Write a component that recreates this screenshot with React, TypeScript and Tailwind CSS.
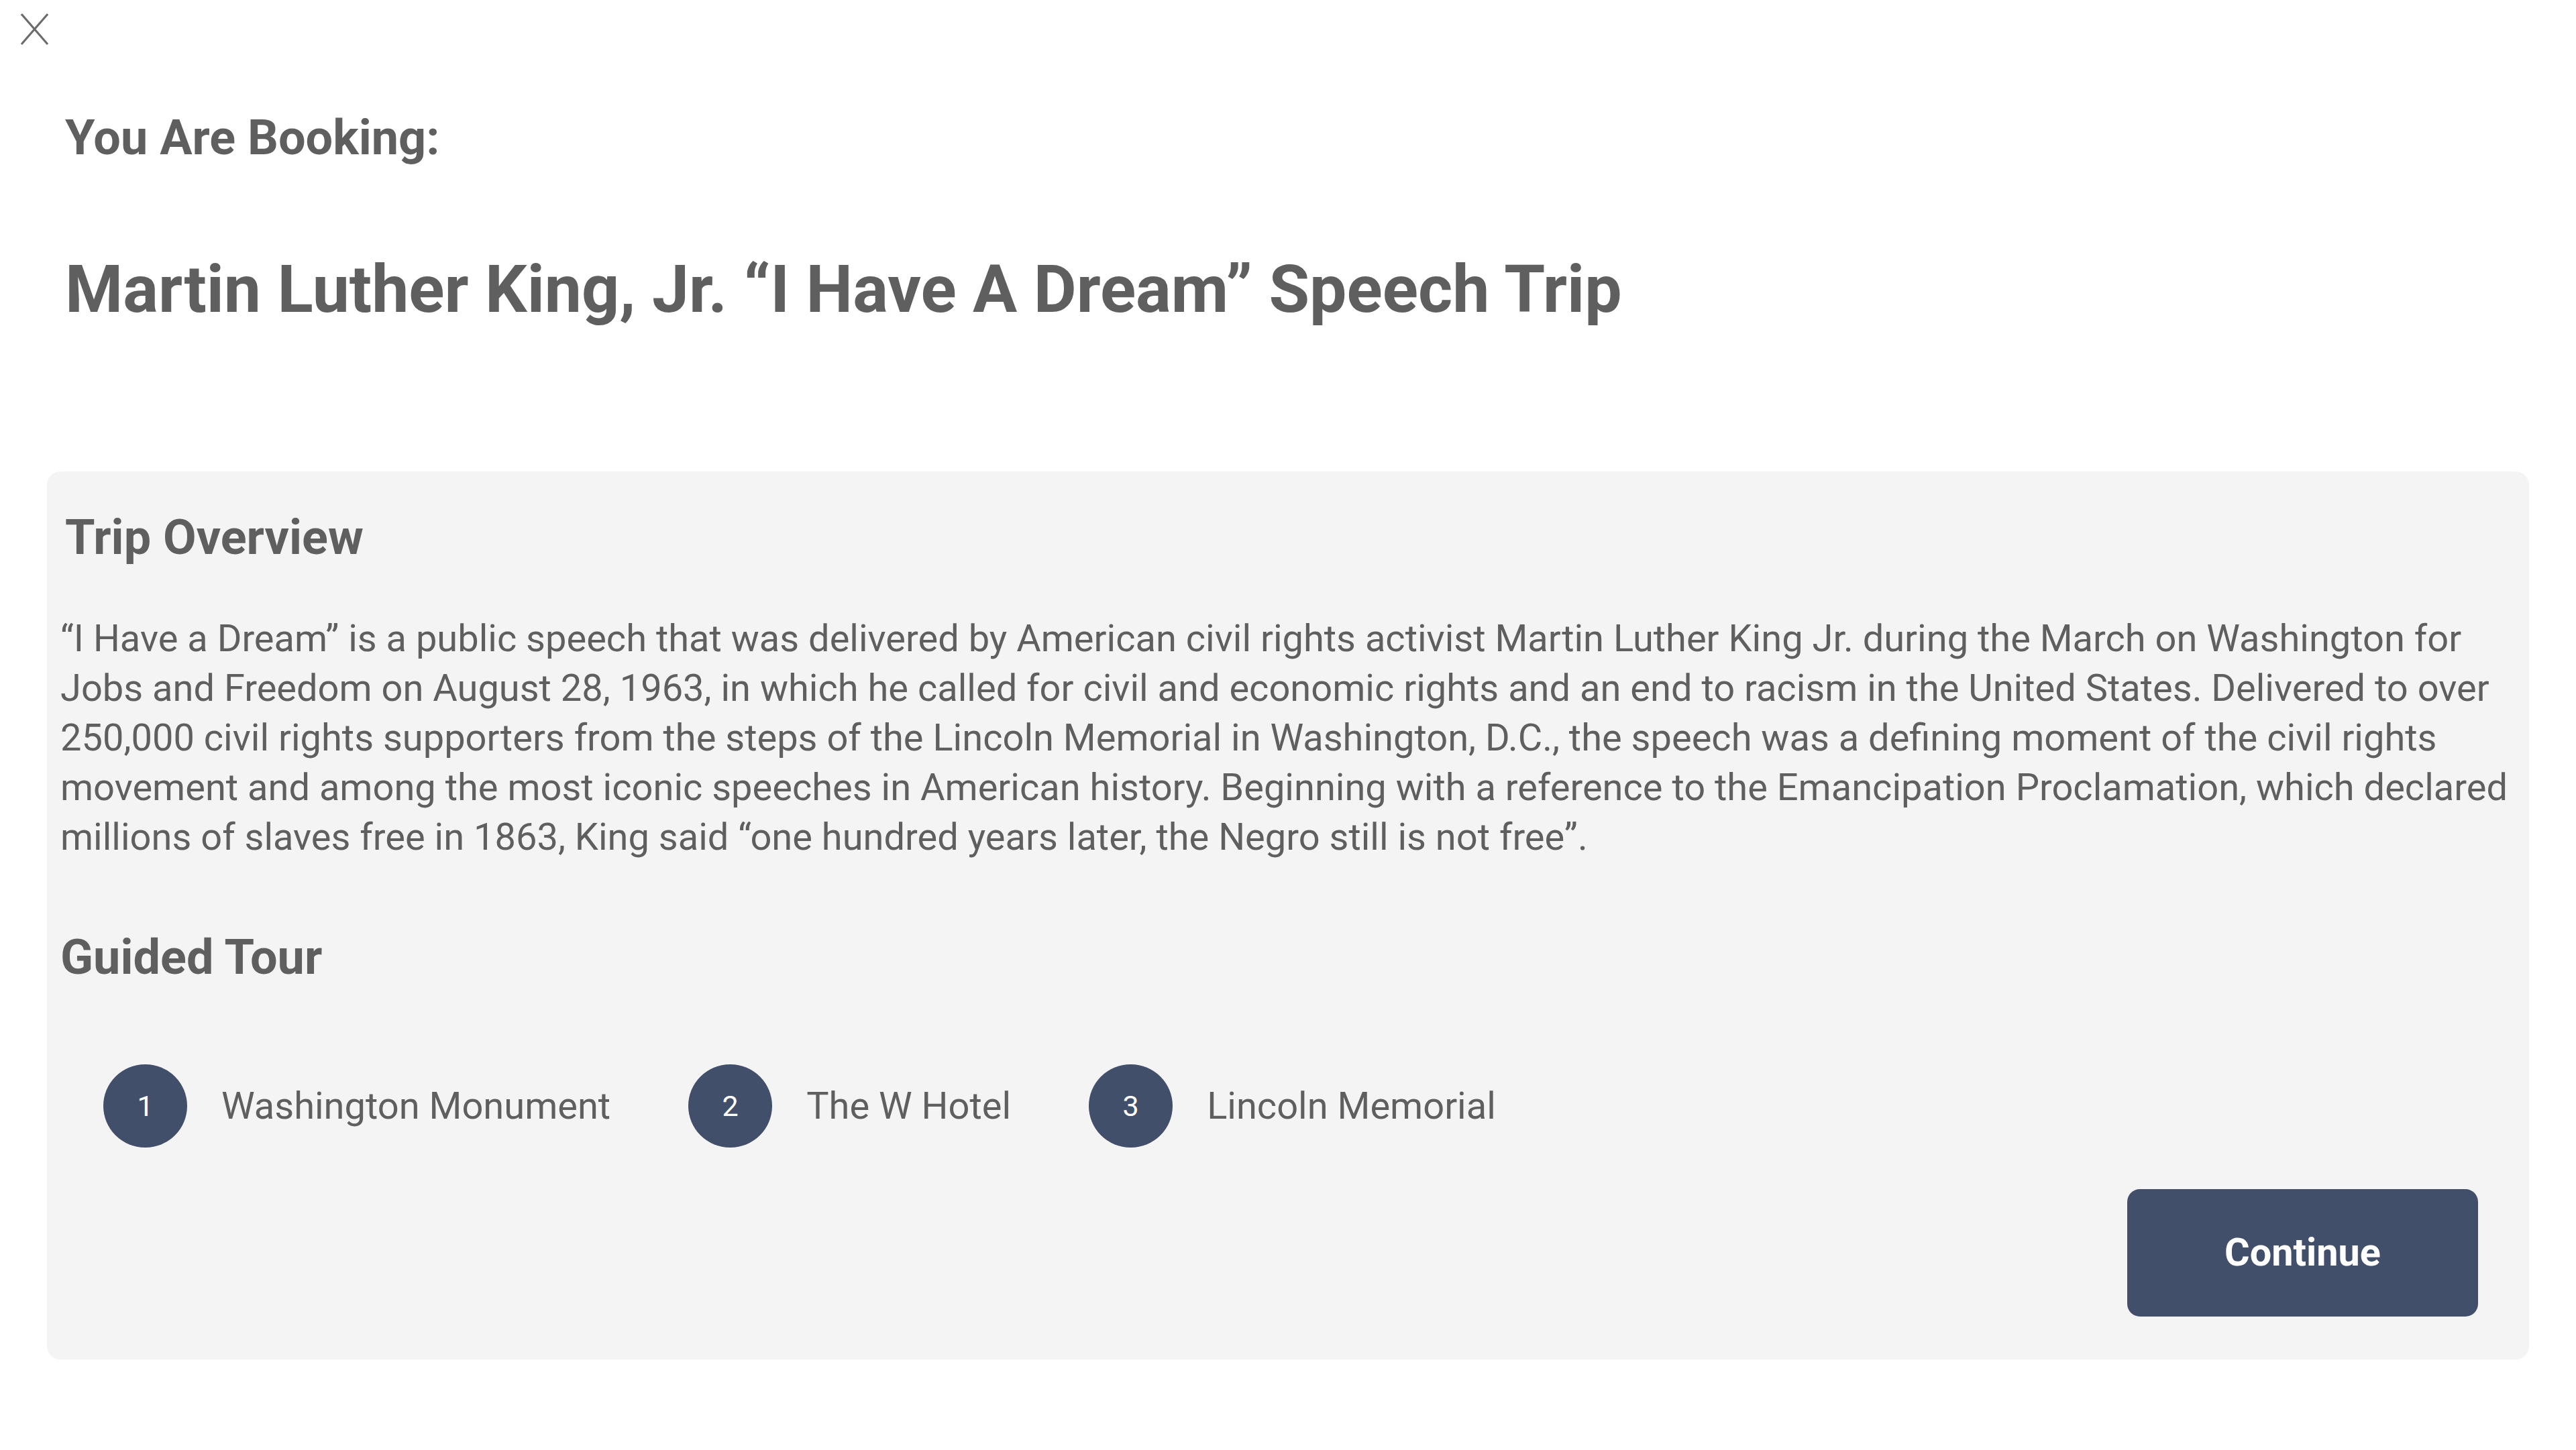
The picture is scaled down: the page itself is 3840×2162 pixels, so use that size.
import * as React from "react"

const stops = ["Washington Monument", "The W Hotel", "Lincoln Memorial"]

function CloseIcon() {
    return (
        <svg width="41" height="47" viewBox="0 0 41 47" fill="none" stroke="#6b6b6b" strokeWidth="3">
            <line x1="1" y1="1" x2="40" y2="46" />
            <line x1="40" y1="1" x2="1" y2="46" />
        </svg>
    )
}

export default function App() {
    return (
        <div className="min-h-screen bg-white font-['Roboto',sans-serif] text-[#5f5f5f] pb-[136px]">
            <div className="pt-[20px] pl-[31px]">
                <button className="block">
                    <CloseIcon />
                </button>
            </div>

            {/* Header */}
            <div className="pl-[97px]">
                <h2 className="mt-[96px] text-[72px] leading-[86px] font-bold">You Are Booking:</h2>
                <h1 className="mt-[127px] text-[98.5px] leading-[112px] font-bold">
                    Martin Luther King, Jr. “I Have A Dream” Speech Trip
                </h1>
            </div>

            {/* Overview panel */}
            <div className="mx-[70px] mt-[215px] rounded-[20px] bg-[#f4f4f4] pt-[56px] px-[20px] pb-[64px]">
                <h3 className="pl-[7px] text-[72px] leading-[86px] font-bold">Trip Overview</h3>
                <p className="mt-[70px] text-[56px] leading-[74px]">
                    “I Have a Dream” is a public speech that was delivered by American civil rights activist Martin Luther King Jr. during the March on Washington for Jobs and Freedom on August 28, 1963, in which he called for civil and economic rights and an end to racism in the United States. Delivered to over 250,000 civil rights supporters from the steps of the Lincoln Memorial in Washington, D.C., the speech was a defining moment of the civil rights movement and among the most iconic speeches in American history. Beginning with a reference to the Emancipation Proclamation, which declared millions of slaves free in 1863, King said “one hundred years later, the Negro still is not free”.
                </p>

                <h3 className="mt-[100px] text-[72px] leading-[86px] font-bold">Guided Tour</h3>

                <div className="mt-[116px] ml-[64px] flex items-center gap-[116px]">
                    {stops.map((stop, i) => (
                        <div key={stop} className="flex items-center gap-[51px]">
                            <div className="w-[125px] h-[124px] rounded-full bg-[#424f6b] flex items-center justify-center text-white text-[43px] leading-none">
                                {i + 1}
                            </div>
                            <span className="text-[56px] leading-[74px]">{stop}</span>
                        </div>
                    ))}
                </div>

                <div className="mt-[62px] flex justify-end pr-[56px]">
                    <button className="w-[523px] h-[190px] rounded-[19px] bg-[#424f6b] text-white text-[57.6px] font-bold">
                        Continue
                    </button>
                </div>
            </div>
        </div>
    )
}
